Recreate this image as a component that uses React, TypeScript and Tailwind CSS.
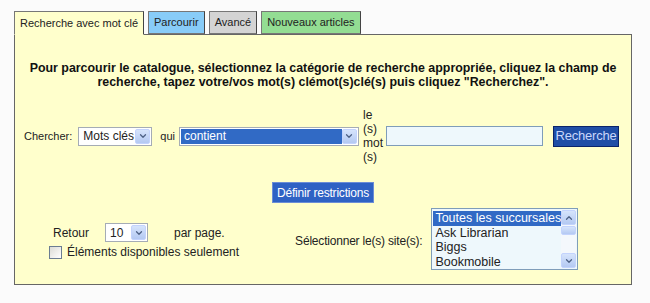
import { ChevronDown, ChevronUp } from "lucide-react";

const font = { fontFamily: '"Liberation Sans", Arial, sans-serif' };

function ArrowBtn({ up = false, h = "h-full" }: { up?: boolean; h?: string }) {
  return (
    <div className={`w-[15px] ${h} flex items-center justify-center bg-gradient-to-b from-[#d6e4fc] to-[#b4c9f2] border border-[#c3d3fd] rounded-[2px]`}>
      {up ? (
        <ChevronUp size={10} strokeWidth={3} className="text-[#4d6185]" />
      ) : (
        <ChevronDown size={10} strokeWidth={3} className="text-[#4d6185]" />
      )}
    </div>
  );
}

function FakeSelect({ value, w, active = false }: { value: string; w: string; active?: boolean }) {
  return (
    <div className={`${w} h-[19px] border border-[#a5acb5] bg-white flex items-stretch p-px`}>
      <div className={`flex-1 flex items-center pl-[3px] text-[12px] ${active ? "bg-[#316ac5] text-white" : "text-[#222]"}`}>
        {value}
      </div>
      <ArrowBtn />
    </div>
  );
}

const tabs = [
  { label: "Recherche avec mot clé", bg: "bg-[#ffffcc]", active: true },
  { label: "Parcourir", bg: "bg-[#88ccf8]" },
  { label: "Avancé", bg: "bg-[#d4d4d4]" },
  { label: "Nouveaux articles", bg: "bg-[#93dd93]" },
];

const sites = ["Toutes les succursales", "Ask Librarian", "Biggs", "Bookmobile"];

export default function App() {
  return (
    <div className="w-[650px] h-[303px] bg-[#fbfbfb] pt-[11px] pl-[14px] text-[#222]" style={font}>
      <div className="flex items-end gap-[4px]">
        {tabs.map((t) => (
          <div
            key={t.label}
            className={`${t.bg} h-[23px] px-[5px] flex items-center text-[11px] border border-[#777] border-r-[#444] ${
              t.active ? "relative z-10 -mb-px border-b-[#ffffcc] h-[24px]" : ""
            }`}
          >
            {t.label}
          </div>
        ))}
      </div>

      <div className="w-[618px] h-[251px] border border-[#666] bg-[#ffffcc]">
        <p className="pt-[26px] px-[2px] text-center font-bold text-[12.4px] leading-[14px] text-[#111]">
          Pour parcourir le catalogue, sélectionnez la catégorie de recherche appropriée, cliquez la champ de
          <br />
          recherche, tapez votre/vos mot(s) clémot(s)clé(s) puis cliquez "Recherchez".
        </p>

        <div className="mt-[19px] pl-[9px] flex items-center text-[11px]">
          <span>Chercher:</span>
          <div className="ml-[6px]">
            <FakeSelect value="Mots clés" w="w-[74px]" />
          </div>
          <span className="ml-[8px]">qui</span>
          <div className="ml-[4px]">
            <FakeSelect value="contient" w="w-[180px]" active />
          </div>
          <div className="ml-[4px] w-[19px] text-[12px] leading-[14px]">
            le
            <br />
            (s)
            <br />
            mot
            <br />
            (s)
          </div>
          <div className="ml-[4px] w-[157px] h-[20px] border border-[#7f9db9] bg-[#eef8fc]" />
          <button className="ml-[10px] h-[21px] w-[66px] bg-[#1f4ea6] border border-[#0a246a] text-[#c9d7fb] text-[13px] tracking-[-0.2px] flex items-center justify-center">
            Recherche
          </button>
        </div>

        <div className="mt-[18px] flex justify-center">
          <button className="h-[21px] px-[4px] bg-[#2f62c4] border border-[#6b8dd6] text-white text-[12px] tracking-[-0.2px] flex items-center">
            Définir restrictions
          </button>
        </div>

        <div className="mt-[5px] pl-[34px] flex items-center text-[12px]">
          <div className="flex flex-col mt-[6px]">
            <div className="flex items-center">
              <span className="pl-[4px] w-[56px]">Retour</span>
              <FakeSelect value="10" w="w-[43px]" />
              <span className="ml-[26px]">par page.</span>
            </div>
            <div className="flex items-center mt-px">
              <div className="w-[13px] h-[13px] border border-[#6b7d92] bg-gradient-to-br from-[#dcdcd6] to-white" />
              <span className="ml-[5px]">Éléments disponibles seulement</span>
            </div>
          </div>
          <span className="ml-[56px] mt-[4px] tracking-[-0.2px]">Sélectionner le(s) site(s):</span>
          <div className="ml-[9px] w-[147px] h-[62px] border border-[#7f9db9] bg-[#eef8fc] flex p-px">
            <div className="flex-1 flex flex-col text-[12.5px] leading-[14.5px] pt-px">
              {sites.map((s, i) => (
                <div key={s} className={`pl-[2px] whitespace-nowrap ${i === 0 ? "bg-[#316ac5] text-white" : "text-[#222]"}`}>
                  {s}
                </div>
              ))}
            </div>
            <div className="w-[15px] flex flex-col bg-[#f4f8fc]">
              <ArrowBtn up h="h-[15px]" />
              <div className="h-[9px] mt-[1px] bg-gradient-to-b from-[#d6e4fc] to-[#b4c9f2] border border-[#c3d3fd] rounded-[2px]" />
              <div className="flex-1" />
              <ArrowBtn h="h-[15px]" />
            </div>
          </div>
        </div>
      </div>
    </div>
  );
}
